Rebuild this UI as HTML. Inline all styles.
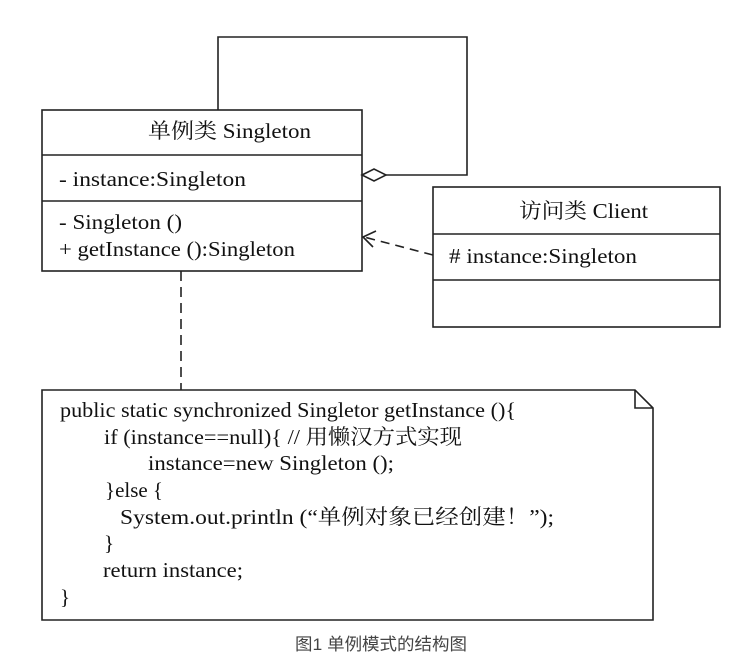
<!DOCTYPE html>
<html><head><meta charset="utf-8"><style>
body{margin:0;background:#fff;width:740px;height:663px;overflow:hidden;position:relative}
svg{position:absolute;left:0;top:0}
text{font-family:"Liberation Serif","Noto Serif CJK SC",serif;fill:#111;font-size:21px}
.cap{font-family:"Liberation Sans","Noto Sans CJK SC",sans-serif;font-size:17px;fill:#444}
</style></head><body>
<svg width="740" height="663" viewBox="0 0 740 663">
<g fill="none" stroke="#222" stroke-width="1.6">
<rect x="42" y="110" width="320" height="161"/>
<line x1="42" y1="155" x2="362" y2="155"/>
<line x1="42" y1="201" x2="362" y2="201"/>
<polyline points="218,110 218,37 467,37 467,175 386,175"/>
<polygon points="362,175 374,169 386,175 374,181" fill="#fff"/>
<rect x="433" y="187" width="287" height="140"/>
<line x1="433" y1="234" x2="720" y2="234"/>
<line x1="433" y1="280" x2="720" y2="280"/>
<line x1="433" y1="255" x2="364" y2="237" stroke-dasharray="9,6"/>
<polyline points="376,231 363,237 373,247"/>
<line x1="181" y1="271" x2="181" y2="390" stroke-dasharray="10,6"/>
<polygon points="42,390 635,390 653,408 653,620 42,620"/>
<polyline points="635,390 635,408 653,408"/>
</g>
<text x="148" y="138" textLength="163" lengthAdjust="spacingAndGlyphs">单例类 Singleton</text>
<text x="59" y="186" textLength="187" lengthAdjust="spacingAndGlyphs">- instance:Singleton</text>
<text x="59" y="229" textLength="123" lengthAdjust="spacingAndGlyphs">- Singleton ()</text>
<text x="59" y="256" textLength="236" lengthAdjust="spacingAndGlyphs">+ getInstance ():Singleton</text>
<text x="519" y="218" textLength="129" lengthAdjust="spacingAndGlyphs">访问类 Client</text>
<text x="449" y="263" textLength="188" lengthAdjust="spacingAndGlyphs"># instance:Singleton</text>
<text x="60" y="417" textLength="456" lengthAdjust="spacingAndGlyphs">public static synchronized Singletor getInstance (){</text>
<text x="104" y="444" textLength="358" lengthAdjust="spacingAndGlyphs">if (instance==null){ // 用懒汉方式实现</text>
<text x="148" y="470" textLength="246" lengthAdjust="spacingAndGlyphs">instance=new Singleton ();</text>
<text x="105" y="497" textLength="58" lengthAdjust="spacingAndGlyphs">}else {</text>
<text x="120" y="524" textLength="434" lengthAdjust="spacingAndGlyphs">System.out.println (“单例对象已经创建！”);</text>
<text x="104" y="550">}</text>
<text x="103" y="577" textLength="140" lengthAdjust="spacingAndGlyphs">return instance;</text>
<text x="60" y="604">}</text>
<text class="cap" x="295" y="650" textLength="172" lengthAdjust="spacingAndGlyphs">图1 单例模式的结构图</text>
</svg>
</body></html>
